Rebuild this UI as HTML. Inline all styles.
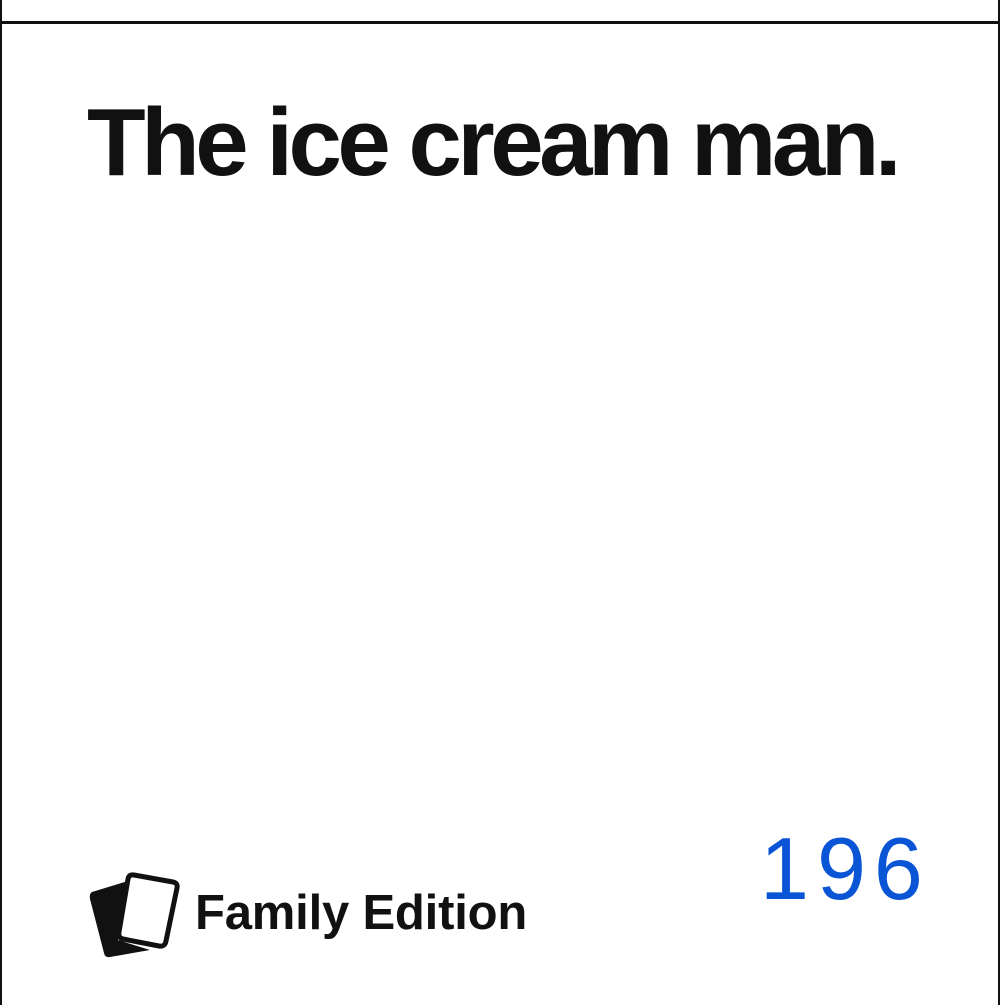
<!DOCTYPE html>
<html><head><meta charset="utf-8"><style>
html,body{margin:0;padding:0;background:#fff;}
body{width:1000px;height:1005px;position:relative;overflow:hidden;font-family:"Liberation Sans",sans-serif;}
.bl{position:absolute;left:0;top:0;width:2px;height:1005px;background:#111;}
.br{position:absolute;left:998px;top:0;width:2px;height:1005px;background:#111;}
.bt{position:absolute;left:0;top:21px;width:1000px;height:3px;background:#111;}
.title{position:absolute;left:87px;top:88px;font-size:96px;font-weight:bold;letter-spacing:-4.5px;color:#111;white-space:nowrap;line-height:1.15;}
.fe{position:absolute;left:195px;top:885px;font-size:49px;font-weight:bold;letter-spacing:-0.2px;color:#111;white-space:nowrap;line-height:1.15;}
.num{position:absolute;left:760px;top:818px;font-size:88px;color:#0a55d6;letter-spacing:8px;white-space:nowrap;line-height:1.15;}
</style></head><body>
<div class="bl"></div><div class="br"></div><div class="bt"></div>
<div class="title">The ice cream man.</div>
<svg style="position:absolute;left:0;top:0" width="1000" height="1005">
<path d="M92 892 L128 881 L118 940 L150 950 L110 957 Q105 958 104 953 L90 899 Q89 894 92 892 Z" fill="#111"/>
<path d="M134 875 L173 882 Q178 883 177 888 L166 941 Q165 947 159 946 L123 939 Q118 938 119 932 L128 879 Q129 874 134 875 Z" fill="#fff" stroke="#111" stroke-width="5" stroke-linejoin="round"/>
</svg>
<div class="fe">Family Edition</div>
<div class="num">196</div>
</body></html>
